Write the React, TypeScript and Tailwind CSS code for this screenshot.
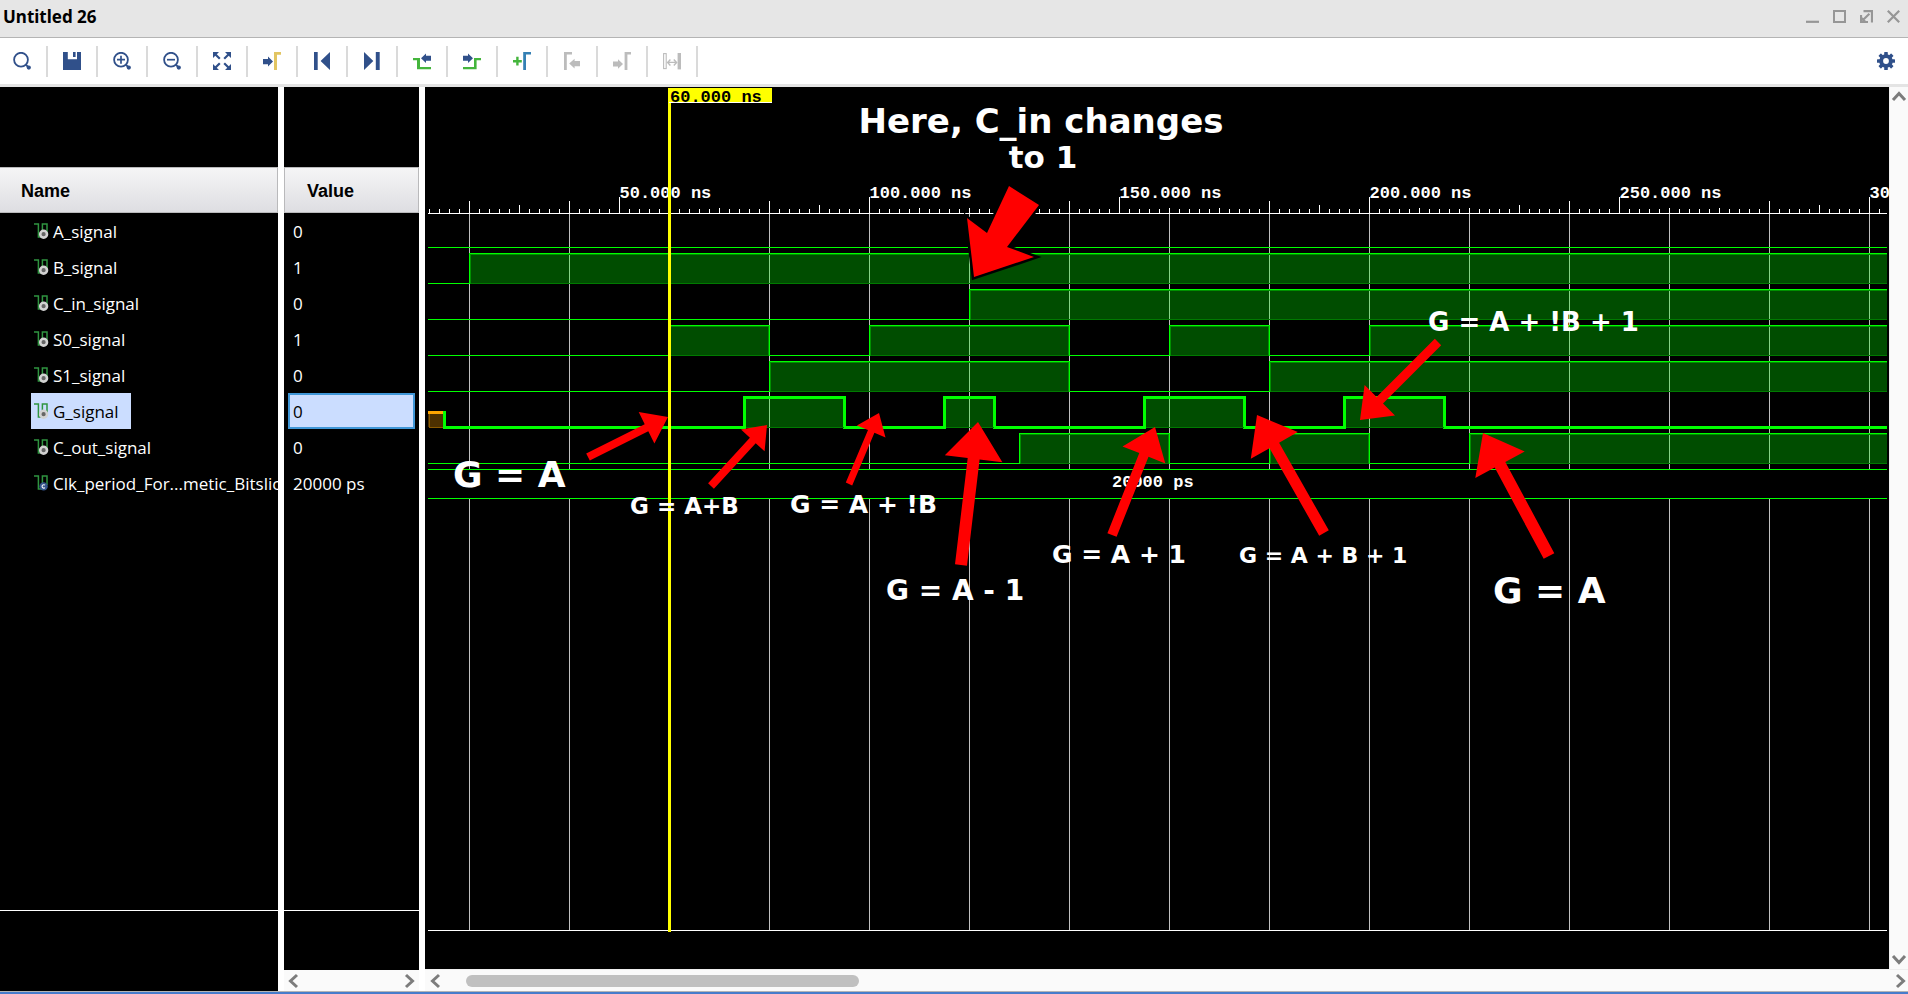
import React from "react";

const NAVY = "#30508a";
const GREEN = "#44b53c";
const GRAY = "#bcbcbc";

/* ---------- toolbar icons, all on an 18 x 18 grid ---------- */

function Glyph({ children }: { children: React.ReactNode }) {
  return (
    <svg width="18" height="18" viewBox="0 0 18 18" aria-hidden="true">
      {children}
    </svg>
  );
}

function Lens({ children }: { children?: React.ReactNode }) {
  return (
    <Glyph>
      <circle cx="8" cy="7.7" r="6.9" fill="none" stroke={NAVY} strokeWidth="1.8" />
      <path d="M12.8 12.6 15.2 15" stroke={NAVY} strokeWidth="2" />
      <circle cx="15.8" cy="15.6" r="2.1" fill={NAVY} />
      {children}
    </Glyph>
  );
}

const tools: { label: string; icon: React.ReactNode; disabled?: boolean }[] = [
  { label: "Find", icon: <Lens /> },
  {
    label: "Save",
    icon: (
      <Glyph>
        <path d="M0 0H4.8V7.3H14V0H18V18H0Z" fill={NAVY} />
        <path d="M10 0H12.6V5H10Z" fill={NAVY} />
      </Glyph>
    ),
  },
  {
    label: "Zoom in",
    icon: (
      <Lens>
        <path d="M4 7.7H12M8 3.7V11.7" stroke={NAVY} strokeWidth="1.7" />
      </Lens>
    ),
  },
  {
    label: "Zoom out",
    icon: (
      <Lens>
        <path d="M4 7.7H12" stroke={NAVY} strokeWidth="1.7" />
      </Lens>
    ),
  },
  {
    label: "Zoom fit",
    icon: (
      <Glyph>
        <path d="M0 0H6L0 6ZM18 0V6L12 0ZM0 18V12L6 18ZM18 18H12L18 12Z" fill={NAVY} />
        <path d="M2 2 6.8 6.8M16 2 11.2 6.8M2 16 6.8 11.2M16 16 11.2 11.2" stroke={NAVY} strokeWidth="2.2" />
      </Glyph>
    ),
  },
  {
    label: "Go to cursor",
    icon: (
      <Glyph>
        <path d="M0 7H5V4.6L10 9.4 5 14.4V12.2H0Z" fill={NAVY} />
        <path d="M11 0H18V2.8H14V18H11Z" fill="#e2c562" />
      </Glyph>
    ),
  },
  {
    label: "Go to time 0",
    icon: (
      <Glyph>
        <path d="M1 0H4.7V18H1ZM17 0V18L7.6 9Z" fill={NAVY} />
      </Glyph>
    ),
  },
  {
    label: "Go to last time",
    icon: (
      <Glyph>
        <path d="M12.8 0H16.7V18H12.8ZM1 0V18L10.3 9Z" fill={NAVY} />
      </Glyph>
    ),
  },
  {
    label: "Previous transition",
    icon: (
      <Glyph>
        <path d="M0 6H7V15H18V17.2H4V8.3H0Z" fill={GREEN} />
        <path d="M18 3.8H13V1.4L8 6.2 13 11V8.8H18Z" fill={NAVY} />
      </Glyph>
    ),
  },
  {
    label: "Next transition",
    icon: (
      <Glyph>
        <path d="M0 15H11V6H18V8.3H13.6V17.2H0Z" fill={GREEN} />
        <path d="M0 3.8H5V1.4L10 6.2 5 11V8.8H0Z" fill={NAVY} />
      </Glyph>
    ),
  },
  {
    label: "Add marker",
    icon: (
      <Glyph>
        <path d="M0 9.2H8.8M4.4 4.8V13.6" stroke={GREEN} strokeWidth="2.4" />
        <path d="M10.2 0H18V2.6H13V18H10.2Z" fill="#3580b4" />
      </Glyph>
    ),
  },
  {
    label: "Previous marker",
    disabled: true,
    icon: (
      <Glyph>
        <path d="M1 0H9V2.6H3.8V18H1Z" fill={GRAY} />
        <path d="M17 9H11.6V6.8L6.2 11.6 11.6 16.4V14.2H17Z" fill={GRAY} />
      </Glyph>
    ),
  },
  {
    label: "Next marker",
    disabled: true,
    icon: (
      <Glyph>
        <path d="M11.6 0H18V2.6H14.4V18H11.6Z" fill={GRAY} />
        <path d="M0 9.4H5V7.2L10 12 5 16.8V14.6H0Z" fill={GRAY} />
      </Glyph>
    ),
  },
  {
    label: "Swap cursors",
    disabled: true,
    icon: (
      <Glyph>
        <rect x="0.6" y="1.6" width="2.6" height="15" fill="none" stroke={GRAY} strokeWidth="1.1" />
        <rect x="14.6" y="1" width="3.4" height="16.4" fill={GRAY} />
        <path d="M5.5 10.4H12.5M7.4 7.4 4.6 10.4 7.4 13.4M10.8 7.4 13.6 10.4 10.8 13.4" fill="none" stroke={GRAY} strokeWidth="1.4" />
      </Glyph>
    ),
  },
];

function Gear() {
  return (
    <Glyph>
      {[0, 45, 90, 135].map((a) => (
        <rect key={a} x="7.2" y="0" width="3.6" height="18" rx="0.6" fill={NAVY} transform={`rotate(${a} 9 9)`} />
      ))}
      <circle cx="9" cy="9" r="6.8" fill={NAVY} />
      <circle cx="9" cy="9" r="2.9" fill="#fff" />
    </Glyph>
  );
}

const windowControls = [
  { label: "Minimize", d: "M0 11.8H13", w: 2.2 },
  { label: "Maximize", d: "M1 1H12V12H1Z", w: 2 },
  { label: "Float", d: "M3.5 1.2H12V12.6M9.4 3.8 3.5 9.5M1 5V12H8M1.4 8 5 11.6", w: 2.2 },
  { label: "Close", d: "M0.8 0.8 12.2 12.2M12.2 0.8 0.8 12.2", w: 2.2 },
];

/* ---------- signal list ---------- */

const signals = [
  { name: "A_signal", value: "0" },
  { name: "B_signal", value: "1" },
  { name: "C_in_signal", value: "0" },
  { name: "S0_signal", value: "1" },
  { name: "S1_signal", value: "0" },
  { name: "G_signal", value: "0", selected: true },
  { name: "C_out_signal", value: "0" },
  { name: "Clk_period_For...metic_Bitslice", value: "20000 ps", constant: true },
];

function SignalIcon({ constant }: { constant?: boolean }) {
  return (
    <svg width="15" height="16" viewBox="0 0 15 16" className="shrink-0" aria-hidden="true">
      <path d="M0 1H4.4V14H8.4V1H13V10" fill="none" stroke="#2f9440" strokeWidth="1.5" />
      {constant ? (
        <>
          <circle cx="9.6" cy="11.4" r="4.2" fill="#35548c" />
          <path d="M11 10.2A1.7 1.7 0 1 0 11 12.6" fill="none" stroke="#fff" strokeWidth="1.1" />
        </>
      ) : (
        <>
          <circle cx="9.6" cy="11.2" r="3.4" fill="#666" stroke="#d2d2d2" strokeWidth="2.6" />
        </>
      )}
    </svg>
  );
}

const headCell =
  "h-[46px] border border-[#b9b9bb] bg-linear-to-b from-[#f5f5f6] to-[#dedee2] px-0 pt-[2px] pb-0 text-left font-['Liberation_Sans',sans-serif] text-[18px] font-bold text-black";

function Chevron({ dir }: { dir: "left" | "right" | "up" | "down" }) {
  const d = {
    left: "M11 2 4.5 8 11 14",
    right: "M5 2 11.5 8 5 14",
    up: "M2 11 8 4.5 14 11",
    down: "M2 5 8 11.5 14 5",
  }[dir];
  return (
    <svg width="16" height="16" viewBox="0 0 16 16" className="block" aria-hidden="true">
      <path d={d} fill="none" stroke="#7c7c7c" strokeWidth="3" />
    </svg>
  );
}

/* ---------- waveform plot ---------- */

// The plot's origin in the drawing's coordinate system.
const LEFT = 428;
const TOP = 87;
const END = 1000;

const timeX = (ns: number) => 369.5 + ns * 5;

const waves: { low: number; thick?: boolean; start?: number; high: [number, number][] }[] = [
  { low: 247, high: [] },
  { low: 283, high: [[20, END]] },
  { low: 319, high: [[120, END]] },
  { low: 355, high: [[60, 80], [100, 140], [160, 180], [200, END]] },
  { low: 391, high: [[80, 140], [180, END]] },
  { low: 427, thick: true, start: 15, high: [[75, 95], [115, 125], [155, 175], [195, 215]] },
  { low: 463, high: [[130, 160], [180, 200], [220, END]] },
];

// Tops of the ten-nanosecond ticks, from 20 ns on.
const tenTops = [
  201, 205, 201, 197, 208, 208, 201, 205, 197, 208, 208, 205, 201, 197, 208, 208, 201, 205, 197, 208, 208, 205, 201,
  197, 208, 208, 201, 205, 197,
];

function tickTop(ns: number) {
  return ns % 10 === 0 && ns >= 20 ? (tenTops[(ns - 20) / 10] ?? 208) : 209;
}

const ticks = Array.from({ length: 294 }, (_, i) => 12 + i * 2);
const gridLines = Array.from({ length: 30 }, (_, i) => 20 + i * 20);
const timeLabels = [50, 100, 150, 200, 250, 300];

function Wave({ low, high, thick, start }: (typeof waves)[number]) {
  const base = low + 0.5;
  const top = base - 30;
  const line =
    `M${start ? timeX(start) : LEFT} ${base}` +
    high.map(([a, b]) => `H${timeX(a)}V${top}H${timeX(b)}V${base}`).join("") +
    `H${timeX(END + 10)}`;
  return (
    <g>
      {high.map(([a, b]) => (
        <g key={a}>
          <rect x={timeX(a)} y={top} width={timeX(b) - timeX(a)} height="30" fill="#00ff00" fillOpacity="0.3" />
          <path
            d={`M${timeX(a) + 1} ${base}V${top + 1}H${timeX(b) - 1}V${base}`}
            fill="none"
            stroke="#009000"
          />
        </g>
      ))}
      <path d={line} fill="none" stroke="#00ff00" strokeWidth={thick ? 3 : 1} />
      {high.map(([a, b]) => (
        <path key={a} d={`M${timeX(a) + (thick ? 1.5 : 1)} ${base}H${timeX(b) - 1}`} stroke="#007a00" />
      ))}
    </g>
  );
}

// [tail x, tail y, tip x, tip y, shaft width, head length, head width]
const arrows = [
  [588, 457, 668, 417, 8, 24, 35],
  [711, 486, 767, 425, 8, 21, 32],
  [849, 484, 879, 413, 7, 20, 31],
  [961, 565, 978, 422, 12, 37, 58],
  [1112, 535, 1155, 427, 10, 30, 46],
  [1324, 533, 1257, 415, 11, 35, 54],
  [1549, 556, 1483, 433, 12, 36, 56],
  [1438, 342, 1360, 420, 9, 28, 43],
];

function arrowPoints([x1, y1, x2, y2, w, hl, hw]: number[]) {
  const len = Math.hypot(x2 - x1, y2 - y1);
  const ux = (x2 - x1) / len;
  const uy = (y2 - y1) / len;
  const at = (back: number, side: number) =>
    `${(x2 - ux * back - uy * side).toFixed(1)},${(y2 - uy * back + ux * side).toFixed(1)}`;
  return [
    at(len, w / 2),
    at(hl, w / 2),
    at(hl, hw / 2),
    at(0, 0),
    at(hl, -hw / 2),
    at(hl, -w / 2),
    at(len, -w / 2),
  ].join(" ");
}

const notes: { x: number; y: number; text: string; size: string }[] = [
  { x: 453, y: 487, text: "G = A", size: "text-[36px]" },
  { x: 630, y: 514, text: "G = A+B", size: "text-[23px]" },
  { x: 790, y: 513, text: "G = A + !B", size: "text-[25px]" },
  { x: 886, y: 600, text: "G = A - 1", size: "text-[28px]" },
  { x: 1052, y: 563, text: "G = A + 1", size: "text-[25px]" },
  { x: 1239, y: 563, text: "G = A + B + 1", size: "text-[22px]" },
  { x: 1493, y: 603, text: "G = A", size: "text-[36px]" },
  { x: 1428, y: 331, text: "G = A + !B + 1", size: "text-[26px]" },
];

function Plot() {
  return (
    <svg width="100%" height="100%" className="absolute inset-0 overflow-visible" role="img" aria-label="Waveforms">
      <svg width="100%" height="100%">
        <g transform={`translate(${-LEFT} ${-TOP})`} shapeRendering="crispEdges">
          {gridLines.map((t) => (
            <path key={t} d={`M${timeX(t)} 213V4000`} stroke="#c0c0c0" />
          ))}
          {ticks.map((t) => (
            <path key={t} d={`M${timeX(t)} ${tickTop(t)}V213`} stroke="#fff" />
          ))}
          <path d={`M${LEFT} 213.5H${timeX(END)}`} stroke="#fff" />
          {waves.map((w) => (
            <Wave key={w.low} {...w} />
          ))}
          <rect x={LEFT} y="412" width="15" height="15" fill="#4d3000" />
          <path d="M429.5 413V427.5H443" fill="none" stroke="#8a5a00" />
          <path d="M428 412.5H443" stroke="#ffa500" strokeWidth="3" />
          <path d="M444.5 411V429" stroke="#00ff00" strokeWidth="3" />
          <rect x={LEFT - 2} y="469.5" width={timeX(END)} height="29" fill="#000" stroke="#00ff00" />
        </g>
      </svg>
      <g transform={`translate(${-LEFT} ${-TOP})`}>
        <g className="font-['Liberation_Mono',monospace] text-[17px] font-bold" fill="#fff">
          {timeLabels.map((t) => (
            <text key={t} x={timeX(t)} y="198">
              {`${t}.000 ns`}
            </text>
          ))}
          <text x="1112" y="487">
            20000 ps
          </text>
        </g>
        <rect x="668" y="88" width="3" height="844" fill="#ff0" />
        <rect x="669" y="88" width="103" height="14" fill="#ff0" />
        <rect x="669" y="102" width="103" height="1" fill="#fff" />
        <text x="670" y="102" className="font-['Liberation_Mono',monospace] text-[17px] font-bold" fill="#000">
          60.000 ns
        </text>
        {arrows.map((a) => (
          <polygon key={a.join()} points={arrowPoints(a)} fill="#f00" />
        ))}
        <polygon
          points="1009,186 1039,205 1007,247 1034,257 974,277 967,218 987,233"
          fill="#f00"
          stroke="#000"
          strokeWidth="5"
          paintOrder="stroke"
        />
        <g className="font-['DejaVu_Sans',sans-serif] font-bold" fill="#fff">
          {notes.map((n) => (
            <text key={n.x} x={n.x} y={n.y} className={n.size}>
              {n.text}
            </text>
          ))}
          <text x="1041" y="133" textAnchor="middle" className="text-[34px]">
            Here, C_in changes
          </text>
          <text x="1043" y="168" textAnchor="middle" className="text-[31px]">
            to 1
          </text>
        </g>
      </g>
    </svg>
  );
}

export default function App() {
  return (
    <div className="flex min-h-screen flex-col bg-white font-['Open_Sans',sans-serif] text-black">
      <header className="flex h-[38px] shrink-0 items-center justify-between border-b border-[#b4b4b4] bg-[#e6e6e6] pr-2 pb-1 pl-[3px]">
        <h1 className="font-['Noto_Sans',sans-serif] text-[17px] leading-6 font-bold">Untitled 26</h1>
        <div className="flex gap-[14px]">
          {windowControls.map((c) => (
            <button key={c.label} type="button" aria-label={c.label}>
              <svg width="13" height="13" viewBox="0 0 13 13" className="block" aria-hidden="true">
                <path d={c.d} fill="none" stroke="#969696" strokeWidth={c.w} />
              </svg>
            </button>
          ))}
        </div>
      </header>

      <div className="flex h-[49px] shrink-0 items-center justify-between border-b-3 border-[#e4e4e4] pr-[13px]">
        <div className="-ml-0.5 flex">
          {tools.map((t) => (
            <div key={t.label} className="flex h-[31px] border-r-2 border-[#dadada]">
              <button type="button" aria-label={t.label} disabled={t.disabled} className="flex w-12 items-center justify-center">
                {t.icon}
              </button>
            </div>
          ))}
        </div>
        <button type="button" aria-label="Settings">
          <Gear />
        </button>
      </div>

      <main className="flex flex-1 gap-[6px]">
        <section className="flex w-[278px] shrink-0 flex-col overflow-hidden bg-black pt-20">
          <table className="w-full table-fixed border-separate border-spacing-0 text-[17px] leading-6 text-white">
            <thead>
              <tr>
                <th className={`${headCell} border-l-0`}>
                  <span className="pl-[21px]">Name</span>
                </th>
              </tr>
            </thead>
            <tbody>
              {signals.map((s) => (
                <tr key={s.name}>
                  <td className="h-9 p-0 pl-[31px]">
                    <div
                      className={
                        s.selected
                          ? "flex h-9 w-fit items-center gap-1 bg-[#cbddff] pr-3 pl-[3px] whitespace-nowrap text-black"
                          : "flex h-9 items-center gap-1 pl-[3px] whitespace-nowrap"
                      }
                    >
                      <SignalIcon constant={s.constant} />
                      <span className="pt-[2px]">{s.name}</span>
                    </div>
                  </td>
                </tr>
              ))}
            </tbody>
          </table>
          <div className="flex-1" />
          <div className="h-[81px] border-t border-white" />
        </section>

        <section className="flex w-[135px] shrink-0 flex-col bg-black pt-20">
          <table className="w-full table-fixed border-separate border-spacing-0 text-[17px] leading-6 text-white">
            <thead>
              <tr>
                <th className={headCell}>
                  <span className="pl-[22px]">Value</span>
                </th>
              </tr>
            </thead>
            <tbody>
              {signals.map((s) => (
                <tr key={s.name}>
                  <td className="h-9 px-1 py-0">
                    <div
                      className={
                        s.selected
                          ? "flex h-9 items-center border-2 border-[#3f96d6] bg-[#cbddff] pl-[3px] text-black"
                          : "flex h-9 items-center pl-[5px]"
                      }
                    >
                      <span className="pt-[2px]">{s.value}</span>
                    </div>
                  </td>
                </tr>
              ))}
            </tbody>
          </table>
          <div className="flex-1" />
          <div className="h-[60px] border-t border-white" />
          <div className="flex h-[21px] items-center justify-between bg-[#fafafa] px-[2px]">
            <button type="button" aria-label="Scroll values left">
              <Chevron dir="left" />
            </button>
            <button type="button" aria-label="Scroll values right">
              <Chevron dir="right" />
            </button>
          </div>
        </section>

        <section className="flex min-w-0 flex-1 flex-col">
          <div className="flex flex-1">
            <div className="flex min-w-0 flex-1 flex-col overflow-hidden bg-black pr-[2px] pl-[3px]">
              <div className="relative flex-1 border-b border-white">
                <Plot />
              </div>
              <div className="h-[38px]" />
            </div>
            <div className="flex w-[19px] flex-col items-center justify-between border-l border-[#eeeeee] bg-[#fafafa] py-[2px]">
              <button type="button" aria-label="Scroll up">
                <Chevron dir="up" />
              </button>
              <button type="button" aria-label="Scroll down">
                <Chevron dir="down" />
              </button>
            </div>
          </div>
          <div className="flex h-[22px] items-center gap-[22px] border-t border-[#eeeeee] bg-[#fafafa] pl-[3px]">
            <button type="button" aria-label="Scroll left">
              <Chevron dir="left" />
            </button>
            <div className="flex-1">
              <div className="h-3 w-[28%] rounded-full bg-[#c0c0c0]" />
            </div>
            <button type="button" aria-label="Scroll right">
              <Chevron dir="right" />
            </button>
          </div>
        </section>
      </main>
      <footer className="h-[3px] shrink-0 border-t border-[#b4b4b4] bg-[#477ccb]" />
    </div>
  );
}
